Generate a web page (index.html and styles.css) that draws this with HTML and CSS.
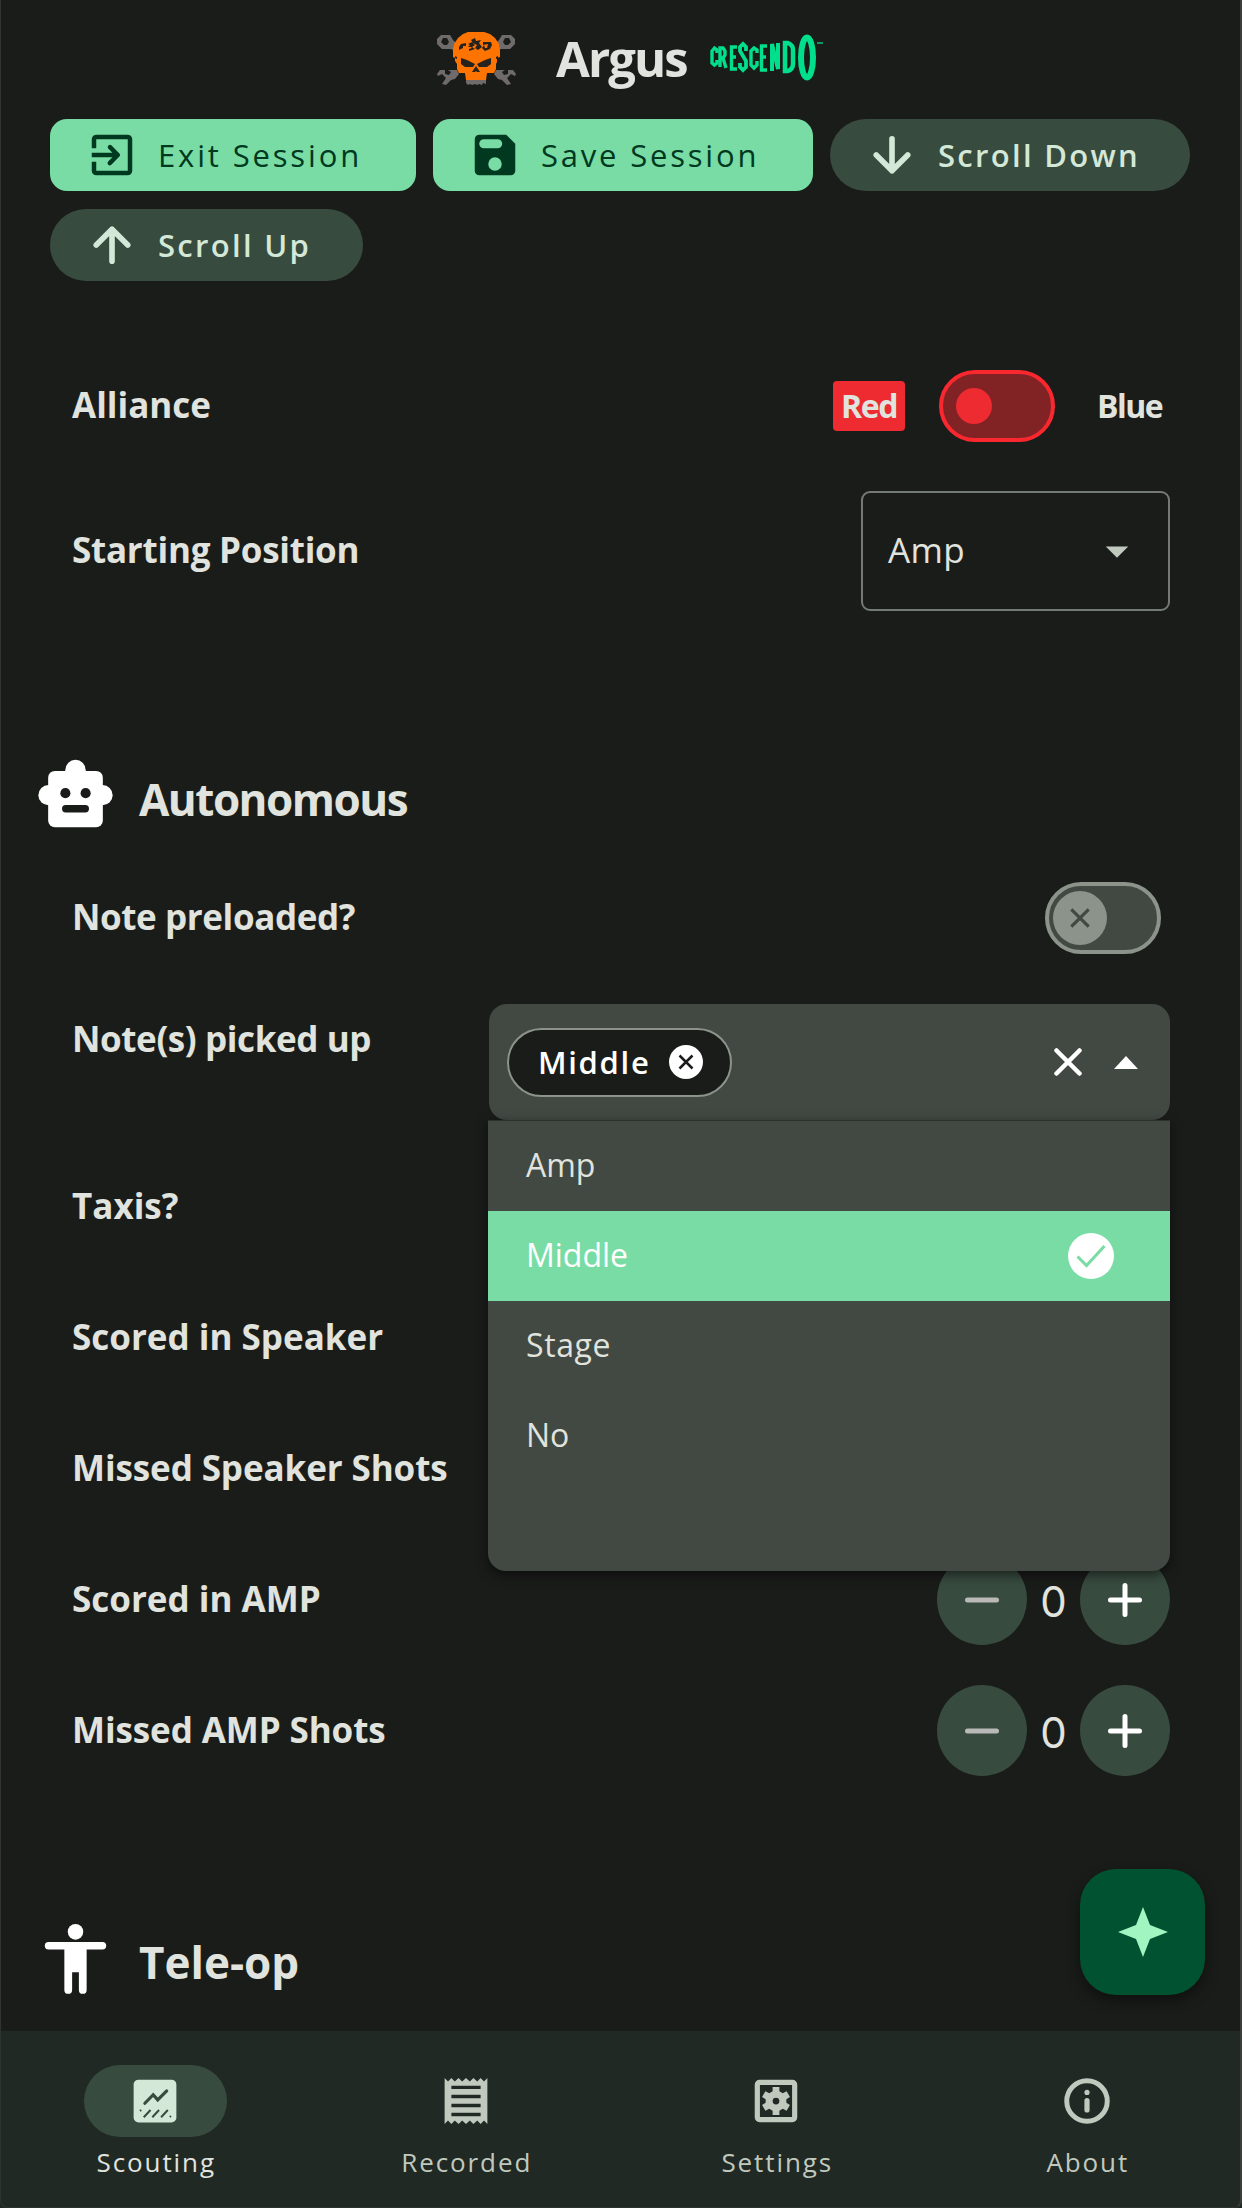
FILE: index.html
```html
<!DOCTYPE html>
<html lang="en">
<head>
<meta charset="utf-8">
<title>Argus</title>
<link rel="stylesheet" href="styles.css">
</head>
<body>
<div class="app">
  <header class="header">
    <svg class="skull" viewBox="0 0 79 54">
      <g fill="#6f6b6a" fill-rule="evenodd">
        <path d="M4 3h9l3 5 5 5-3 6-4-2H5l-5-5V7ZM6 6 4 10l3 3h3l2-3-2-4ZM74 3h-9l-3 5-5 5 3 6 4-2h9l5-5V7ZM72 6l2 4-3 3h-3l-2-3 2-4Z"/>
        <path d="M0 42l3-4h5v4l4 1 2-3-3-2h9l2 4-4 5-4 1-5 5-4-1 4-6-4-4-4 2ZM79 42l-3-4h-5v4l-4 1-2-3 3-2h-9l-2 4 4 5 4 1 5 5 4-1-4-6 4-4 4 2Z"/>
        <path d="M29 45h20v7l-3-1-1 2-3-1-2 1-2-1-3 1-2-1-2 1-2-2Z"/>
      </g>
      <path fill="#ff7300" d="M31 0h16l6 2 5 4 4 6 1 6v7l-3 1v4l-1 2v5l-2 4h-7l-1 7H29l-1-7h-6l-2-4v-5l-2-3v-3l-2-1v-7l1-6 4-6 5-4Z"/>
      <path fill="#26221d" d="M24 26l6 2 8 4-2 3h-8l-4-3ZM54 26l-6 2-8 4 2 3h8l4-3ZM39 34l4 6h-3l-1-1-1 1h-3ZM22 15l2-3 5-1v3h-3v2l-4 2ZM31 12l4-2 3 3-3 2 3 2-6 2v-2l3-1-1-1h-3l2-2ZM34 8l4-2 1 3 5-1-2 3 3 4-4 3-3-2 2-3-4-2ZM46 10h8l1 3-2 4-5 2-3-3 2-3 1 3h2l1-4-5 1ZM18 24l2 1v2l-2-1ZM61 24l-2 1v2l2-1Z"/>
    </svg>
    <h1 class="brand">Argus</h1>
    <svg class="crescendo" viewBox="0 0 114 47" fill="none" stroke="#00df8b" stroke-width="3.400">
      <path d="M7 19V16L4.500 14 2 17v12l2.500 2L7 29v-3"/>
      <path d="M10 33V14h3l2 3v4l-2 3h-3m3 0 3 10M27 13h-5.500v22H27M21.500 23H26"/>
      <path stroke-width="3.800" d="M36 17v-4l-3-3-3 3v4l6 10v6l-3 3-3-3v-4"/>
      <path d="M47 19v-3l-3-2-3 3v14l3 3 3-3v-4M57 12h-5.500v24H57M51.500 23H56"/>
      <path stroke-width="4" d="M62 37V10l6 25V9"/>
      <path stroke-width="4.500" d="M75 9v28h3q5-2 5-7V16q0-5-5-7Z"/>
      <ellipse cx="97" cy="23.500" rx="6" ry="20" stroke-width="6"/>
      <path stroke-width="1.300" d="M107 9h6"/>
    </svg>
  </header>

  <div class="actions">
    <button class="btn primary exit">
      <svg class="icon" viewBox="0 0 24 24"><path d="M10.300 16.300a1 1 0 0 0 1.400 0l3.600-3.600a1 1 0 0 0 0-1.400l-3.600-3.600a1 1 0 0 0-1.400 1.400l1.900 1.900H3v2h9.200l-1.900 1.900a1 1 0 0 0 0 1.400ZM19 3H5a2 2 0 0 0-2 2v4h2V5h14v14H5v-4H3v4a2 2 0 0 0 2 2h14a2 2 0 0 0 2-2V5a2 2 0 0 0-2-2Z"/></svg>
      <span>Exit Session</span>
    </button>
    <button class="btn primary save">
      <svg class="icon" viewBox="0 0 24 24"><path d="M17 3H5a2 2 0 0 0-2 2v14a2 2 0 0 0 2 2h14a2 2 0 0 0 2-2V7Zm-5 16a3 3 0 1 1 0-6 3 3 0 0 1 0 6ZM13.200 9H7a2 2 0 0 1 0-4h6.200a2 2 0 0 1 0 4Z"/></svg>
      <span>Save Session</span>
    </button>
    <button class="btn tonal down">
      <svg class="icon stroke" viewBox="0 0 24 24"><path d="M12 4.800V19M5 12l7 7 7-7"/></svg>
      <span>Scroll Down</span>
    </button>
    <button class="btn tonal up">
      <svg class="icon stroke" viewBox="0 0 24 24"><path d="M12 19.200V5M5 12l7-7 7 7"/></svg>
      <span>Scroll Up</span>
    </button>
  </div>

  <main class="form">
    <div class="row alliance">
      <span class="label">Alliance</span>
      <div class="alliance-pick">
        <span class="team red">Red</span>
        <span class="switch switch-red"><span class="thumb"></span></span>
        <span class="team">Blue</span>
      </div>
    </div>
    <div class="row position">
      <span class="label snug">Starting Position</span>
      <div class="select"><span class="select-text">Amp</span>
        <svg class="icon" viewBox="0 0 24 24"><path d="M7 10l5 5 5-5Z"/></svg>
      </div>
    </div>

    <div class="section auto">
      <svg class="section-icon" viewBox="0 0 24 24">
        <rect x="3.900" y="5.300" width="16.200" height="16.700" rx="2"/>
        <circle cx="12" cy="5" r="3"/><path d="M9 5h6v2H9Z"/>
        <circle cx="4" cy="12.500" r="3"/><circle cx="20" cy="12.500" r="3"/>
        <g fill="#1a1c1a"><circle cx="9" cy="11.900" r="1.500"/><circle cx="15" cy="11.900" r="1.500"/><rect x="8" y="15.400" width="8" height="2.200" rx="1.100"/></g>
      </svg>
      <h2>Autonomous</h2>
    </div>

    <div class="row preload">
      <span class="label tight">Note preloaded?</span>
      <span class="switch switch-off"><span class="thumb"><svg viewBox="0 0 24 24"><path d="M5.500 5.500l13 13m0-13-13 13"/></svg></span></span>
    </div>
    <div class="row picked">
      <span class="label tight">Note(s) picked up</span>
      <div class="multi">
        <div class="multi-head">
          <span class="chip"><span class="chip-text">Middle</span>
            <svg class="chip-x" viewBox="0 0 34 34"><circle cx="17" cy="17" r="17" fill="#fff"/><path d="M10.500 10.500l13 13m0-13-13 13" stroke="#1a1c1a" stroke-width="2.500"/></svg>
          </span>
          <svg class="clear" viewBox="0 0 28 28"><path d="M2.500 2.500l23 23M25.500 2.500l-23 23"/></svg>
          <svg class="caret-up" viewBox="0 0 24 13"><path d="M0 13 12 0 24 13Z"/></svg>
        </div>
        <ul class="menu">
          <li><span>Amp</span></li>
          <li class="selected"><span>Middle</span>
            <svg class="check" viewBox="0 0 46 46"><circle cx="23" cy="23" r="23" fill="#fff"/><path d="M9.500 23.500l9 9L36.500 13" fill="none" stroke="#78dca4" stroke-width="3"/></svg>
          </li>
          <li><span class="wide">Stage</span></li>
          <li><span>No</span></li>
        </ul>
      </div>
    </div>
    <div class="row taxis"><span class="label">Taxis?</span></div>
    <div class="row count"><span class="label">Scored in Speaker</span></div>
    <div class="row count"><span class="label near">Missed Speaker Shots</span></div>
    <div class="row count">
      <span class="label">Scored in AMP</span>
      <div class="stepper">
        <button class="round minus"><svg viewBox="0 0 34 34"><path d="M2.500 17h29"/></svg></button>
        <span class="value">0</span>
        <button class="round"><svg viewBox="0 0 34 34"><path d="M2.500 17h29M17 2.500v29"/></svg></button>
      </div>
    </div>
    <div class="row count">
      <span class="label near">Missed AMP Shots</span>
      <div class="stepper">
        <button class="round minus"><svg viewBox="0 0 34 34"><path d="M2.500 17h29"/></svg></button>
        <span class="value">0</span>
        <button class="round"><svg viewBox="0 0 34 34"><path d="M2.500 17h29M17 2.500v29"/></svg></button>
      </div>
    </div>

    <div class="section tele">
      <svg class="section-icon" viewBox="0 0 24 24"><circle cx="12" cy="4.700" r="2.300"/><path d="M20 7.700H4a1.100 1.100 0 0 0 0 2.200h4.700v12a1.150 1.150 0 0 0 2.300 0v-5.200h2v5.200a1.150 1.150 0 0 0 2.300 0v-12H20a1.100 1.100 0 0 0 0-2.200Z"/></svg>
      <h2>Tele-op</h2>
    </div>
  </main>

  <button class="fab"><svg viewBox="0 0 50 50"><path d="M25 0 32 18 50 25 32 32 25 50 18 32 0 25 18 18Z"/></svg></button>

  <nav class="nav">
    <a class="tab active">
      <span class="pill"><svg class="icon" viewBox="0 0 24 24"><rect x="2.500" y="2.500" width="19" height="19" rx="2.200"/><path d="M7.500 13l3.700-3.800 2 2.300 4-4" fill="none" stroke="#384b3f" stroke-width="1.400" stroke-linecap="round"/><path d="M5.300 16.400l.6-.4M7 19.200l3-3.200m.8 3.200 3-3.200m.9 3.200 3-3.200m.9 3.100.5-.4" stroke="#384b3f" stroke-width=".9"/></svg></span>
      <span class="tab-text">Scouting</span>
    </a>
    <a class="tab">
      <span class="pill"><svg class="icon" viewBox="0 0 24 24"><path fill-rule="evenodd" d="M2.500 1.800 4 3.300 5.500 1.800 7 3.300l1.700-1.500 1.600 1.500L12 1.800l1.700 1.500 1.600-1.500L17 3.300l1.500-1.500L20 3.300l1.500-1.500v20.400L20 20.700l-1.500 1.500-1.500-1.500-1.700 1.500-1.600-1.500-1.700 1.500-1.700-1.500-1.600 1.500L7 20.700l-1.500 1.500L4 20.700l-1.500 1.500ZM5.500 5.200v1.500h13V5.200Zm0 4v1.600h13V9.200Zm0 4v1.600h13v-1.600Zm0 4v1.600h13v-1.600Z"/></svg></span>
      <span class="tab-text">Recorded</span>
    </a>
    <a class="tab">
      <span class="pill"><svg class="icon" viewBox="0 0 24 24"><rect x="3.700" y="3.700" width="16.600" height="16.600" rx="1" fill="none" stroke="currentColor" stroke-width="2.300"/><path fill-rule="evenodd" d="M10.500 5.800h3v1.900l1.500.9 1.700-.9 1.500 2.500-1.600 1v1.600l1.600 1-1.500 2.500-1.700-.9-1.500.9v1.900h-3v-1.900L9 15.400l-1.700.9-1.500-2.500 1.600-1v-1.600l-1.600-1 1.500-2.500 1.700.9 1.500-.9ZM12 10.500a1.500 1.500 0 1 0 0 3 1.500 1.500 0 0 0 0-3Z"/></svg></span>
      <span class="tab-text">Settings</span>
    </a>
    <a class="tab">
      <span class="pill"><svg class="icon" viewBox="0 0 24 24"><circle cx="12" cy="12" r="9" fill="none" stroke="currentColor" stroke-width="2.200"/><path d="M12 11.800v4.200M12 8.100v.1" fill="none" stroke="currentColor" stroke-width="2.300" stroke-linecap="round"/></svg></span>
      <span class="tab-text">About</span>
    </a>
  </nav>
</div>
</body>
</html>
```
FILE: styles.css
```css
* { box-sizing: border-box; }
body { margin: 0; background: #1a1c1a; color: #e1e3de; font-family: "Open Sans", "Noto Sans", sans-serif; }
h1, h2, ul { margin: 0; padding: 0; list-style: none; }
button { border: 0; padding: 0; font: inherit; color: inherit; }
svg { display: block; flex: none; }
span { white-space: nowrap; }
.app { position: relative; width: 1242px; height: 2208px; display: flex; flex-direction: column; overflow: hidden; }
/* thin window frame over the page edges */
.app::after { content: ""; position: absolute; inset: 0; border: 1px solid #303430; border-top: 0; border-right: 2px solid #3c3e3c; border-radius: 0 0 8px 8px; }
.icon { width: 54px; height: 54px; fill: currentColor; }

.header { height: 119px; padding-left: 437px; display: flex; align-items: flex-start; }
.skull { width: 79px; height: 54px; margin-top: 32px; }
.brand { margin: 23px 0 0 40px; width: 154px; font-size: 49px; line-height: 70px; font-weight: 700; letter-spacing: -1.900px; }
.crescendo { width: 114px; height: 47px; margin-top: 34px; }

.actions { padding: 0 40px 0 50px; display: flex; flex-wrap: wrap; gap: 18px 17px; height: 163px; align-content: flex-start; }
.btn { height: 72px; display: flex; align-items: center; padding-left: 35px; gap: 19px; font-size: 31px; font-weight: 500; }
.btn span { margin-top: -1px; }
.primary { background: #78dca4; color: #00391f; border-radius: 17px; letter-spacing: 2.850px; }
.tonal { background: #384b3f; color: #d3e8d7; border-radius: 36px; font-weight: 600; letter-spacing: 2.300px; }
.exit { width: 366px; }
.save { width: 380px; letter-spacing: 2.800px; }
.down { width: 360px; }
.up { width: 313px; }
.stroke { fill: none; stroke: currentColor; stroke-width: 2.500; stroke-linecap: round; stroke-linejoin: round; }

.form { flex: 1; min-height: 0; padding: 0 72px; }
.row { display: flex; justify-content: space-between; align-items: center; }
.label { font-size: 35px; font-weight: 700; line-height: 48px; position: relative; top: -1px; }
.snug { letter-spacing: -.25px; }
.tight { letter-spacing: -.4px; }
.near { letter-spacing: -.1px; }
.alliance { margin-top: 80px; height: 88px; }
.alliance-pick { display: flex; align-items: center; }
.team { font-size: 32px; font-weight: 700; line-height: 50px; width: 73px; letter-spacing: -1.500px; }
.red { width: 72px; text-align: center; margin-right: 34px; background: #ed2b31; border-radius: 4px; }
.switch { width: 116px; height: 72px; border-radius: 36px; border: 4.500px solid; display: flex; align-items: center; }
.switch-red { border-color: #f9282f; background: #812225; padding-left: 13px; margin-right: 42px; }
.switch-red .thumb { width: 36px; height: 36px; border-radius: 50%; background: #ed2b31; }
.position { margin-top: 41px; height: 120px; }
.select { width: 309px; height: 120px; border: 2.250px solid #737a73; border-radius: 9px; display: flex; align-items: center; justify-content: space-between; padding: 0 24px 0 25px; color: #c1c9bf; }
.select-text { font-size: 35px; color: #e1e3de; margin-top: -4px; letter-spacing: .4px; }
.section { display: flex; align-items: center; height: 76px; margin-left: -37px; }
.section-icon { width: 81px; height: 81px; fill: #fff; margin-bottom: 13px; }
.section h2 { font-size: 44px; line-height: 60px; margin-left: 23px; margin-top: -2px; }
.auto { margin-top: 151px; }
.auto h2 { letter-spacing: -1.500px; }
.preload { margin-top: 44px; height: 72px; padding-right: 9px; }
.switch-off { border-color: #8b938a; background: #414942; padding-left: 4px; }
.switch-off .thumb { width: 54px; height: 54px; border-radius: 50%; background: #8b938a; display: grid; place-items: center; }
.switch-off .thumb svg { width: 32px; height: 32px; stroke: #414942; stroke-width: 2.400; fill: none; }
.picked { margin-top: 50px; height: 116px; align-items: flex-start; }
.picked .label { margin-top: 12px; }
.multi { width: 681px; position: relative; z-index: 2; }
.multi-head { height: 116px; border-radius: 18px; background: #414942; display: flex; align-items: center; padding: 0 32px 0 18px; }
.chip { width: 225px; height: 69px; border: 2.250px solid #8b938a; border-radius: 35px; background: #1a1c1a; color: #fff; display: flex; align-items: center; padding: 0 27px 0 29px; justify-content: space-between; }
.chip-text { font-size: 31px; font-weight: 600; letter-spacing: 1.700px; }
.chip-x { width: 34px; height: 34px; margin-left: -8px; }
.clear { width: 28px; height: 28px; margin-left: auto; margin-right: 32px; stroke: #fff; stroke-width: 4.500; stroke-linecap: round; }
.caret-up { width: 24px; height: 13px; fill: #fff; }
.menu { position: absolute; top: 116px; left: -1px; width: 682px; height: 451px; background: #414942; border-radius: 0 0 18px 18px; box-shadow: 0 4px 12px rgba(0,0,0,.55); border-top: 1px solid #2c322d; }
.menu li { height: 90px; padding: 0 56px 0 38px; display: flex; align-items: center; justify-content: space-between; font-size: 32px; }
.menu li > span { margin-top: -3px; }
.menu .wide { letter-spacing: .6px; }
.menu .selected { background: #78dca4; color: #fff; }
.check { width: 46px; height: 46px; }
.taxis { margin-top: 42px; height: 90px; }
.count { height: 91px; margin-top: 40px; }
.stepper { display: flex; align-items: center; width: 233px; justify-content: space-between; }
.round { width: 90px; height: 91px; border-radius: 50%; background: #384b3f; display: grid; place-items: center; color: #fff; }
.round svg { width: 34px; height: 34px; stroke: currentColor; stroke-width: 5; stroke-linecap: round; }
.minus { color: #b9b9b7; }
.value { font-family: Inter, sans-serif; font-size: 42px; line-height: 60px; margin-top: 5px; }
.tele { margin-top: 149px; }
.fab { position: absolute; left: 1080px; top: 1869px; width: 125px; height: 126px; border-radius: 36px; background: #005230; display: grid; place-items: center; box-shadow: 0 6px 14px rgba(0,0,0,.45); }
.fab svg { width: 50px; height: 50px; fill: #a0f5c0; }
.nav { height: 177px; background: #202924; display: flex; padding-top: 34px; }
.tab { flex: 1; display: flex; flex-direction: column; align-items: center; gap: 7px; color: #c1c9bf; font-size: 26px; line-height: 36px; letter-spacing: 1.900px; }
.pill { width: 143px; height: 72px; border-radius: 36px; display: grid; place-items: center; }
.tab-text { padding-left: 2px; }
.active .pill { background: #384b3f; color: #d3e8d7; }
.active .tab-text { color: #e1e3de; }
```
